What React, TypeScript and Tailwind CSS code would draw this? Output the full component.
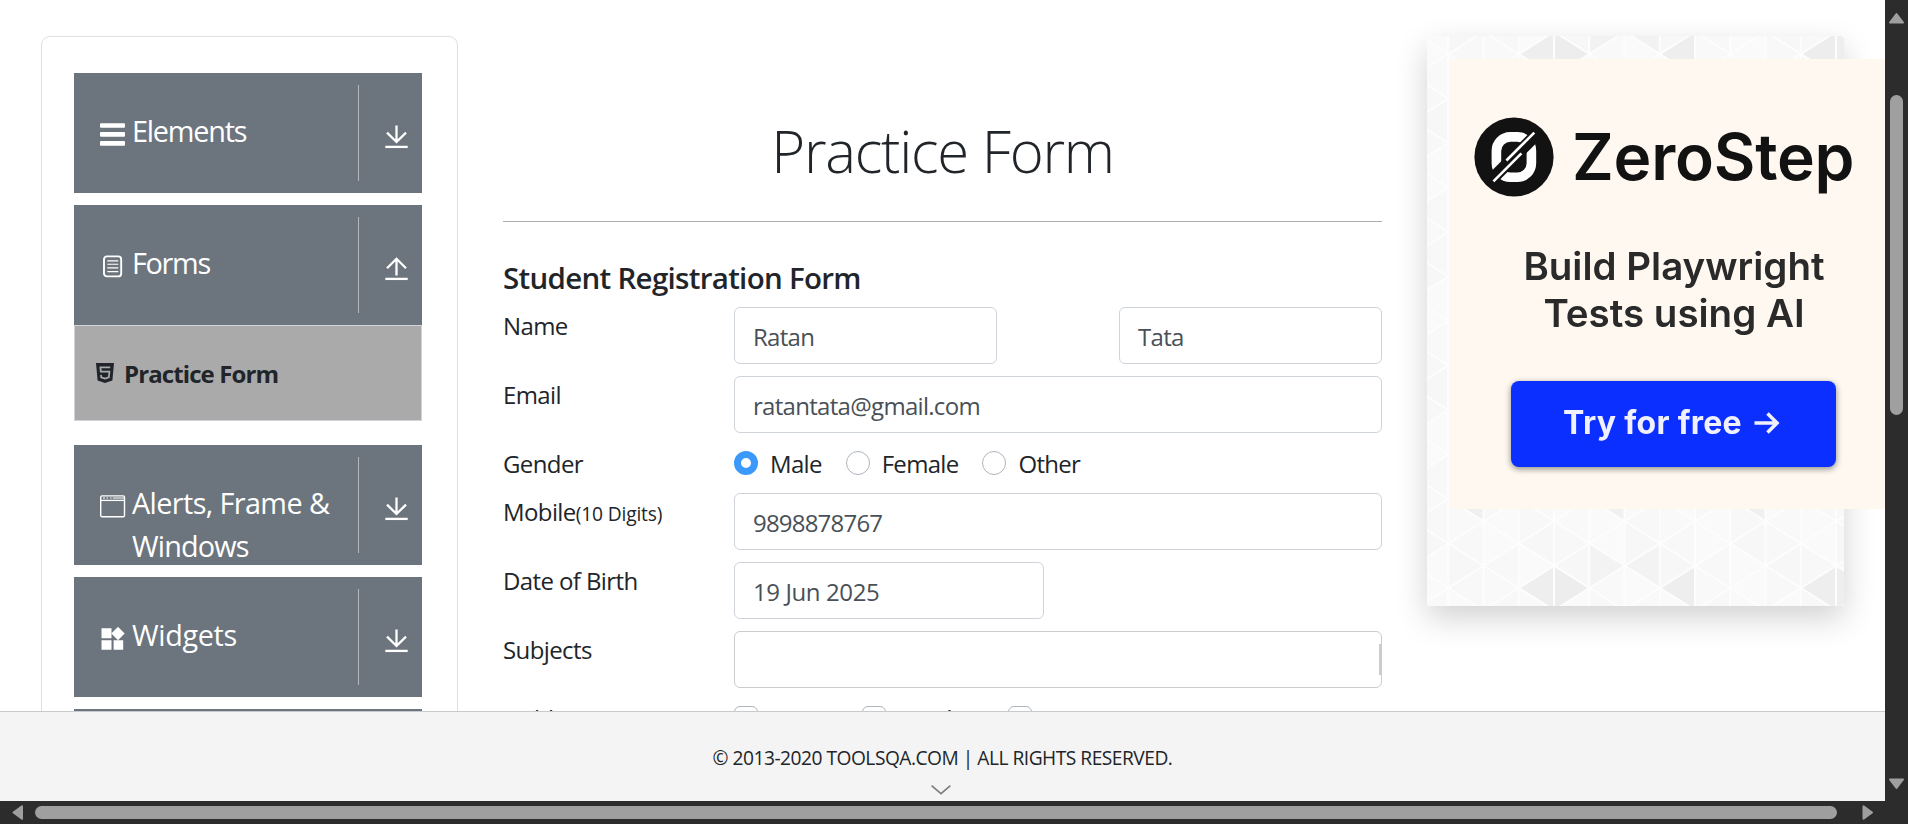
import { type ReactNode } from "react";

type Glyph = "menu" | "form" | "window" | "widgets" | "none";

function Icon({ kind }: { kind: Glyph }) {
  if (kind === "menu")
    return (
      <svg width="26" height="24" viewBox="0 0 26 24" fill="#fff">
        <rect x="0" y="0.2" width="25" height="4.6" rx="1" />
        <rect x="0" y="9.1" width="25" height="4.6" rx="1" />
        <rect x="0" y="18.1" width="25" height="4.6" rx="1" />
      </svg>
    );
  if (kind === "form")
    return (
      <svg width="26" height="24" viewBox="0 0 26 24" fill="none" stroke="#fff">
        <rect x="4" y="1.4" width="17.2" height="20" rx="3" strokeWidth="1.9" />
        <path d="M7.3 5.9h11M7.3 9.3h11M7.3 12.9h11M7.3 16.6h11" strokeWidth="1.1" />
      </svg>
    );
  if (kind === "window")
    return (
      <svg width="26" height="24" viewBox="0 0 26 24" fill="none" stroke="#fff">
        <rect x="0.7" y="0.9" width="23.8" height="20.8" rx="1.3" strokeWidth="1.4" />
        <path d="M1 5.4h23.5" strokeWidth="1.3" />
        <path d="M3 3h2M6.5 3h1.5M10 3h1.5M12.8 3h11.5" strokeWidth="1" />
      </svg>
    );
  if (kind === "widgets")
    return (
      <svg width="26" height="24" viewBox="0 0 26 24" fill="#fff">
        <path d="M1.5 1.2h10v10h-10zM1.5 13.2h10v9.6h-10zM13.6 13.2h9.6v9.6h-9.6z" />
        <path d="M18 -0.2L24.7 6.5L18 13.2L11.3 6.5z" />
      </svg>
    );
  return null;
}

function Arrow({ up }: { up?: boolean }) {
  return (
    <svg width="24" height="25" viewBox="0 0 24 25" fill="none" stroke="#fff" strokeWidth="2.3">
      {up ? <path d="M11.5 18.6V1.8M2 11.2L11.5 1.8L21 11.2" /> : <path d="M11.5 0.4V17M2 7.6L11.5 17L21 7.6" />}
      <path d="M0.3 21.9h22.4" />
    </svg>
  );
}

function Group({ kind, up, children }: { kind: Glyph; up?: boolean; children?: ReactNode }) {
  return (
    <div className="flex h-[120px] shrink-0 overflow-hidden bg-[#6c757d] py-3">
      <div className="flex w-[285px] shrink-0 border-r border-[#b3b7bb] pl-[26px] pt-6">
        <div className="mt-[14px] h-6 w-8 shrink-0">
          <Icon kind={kind} />
        </div>
        <div className="flex flex-col whitespace-nowrap text-[28.8px] leading-[43px] text-white">{children}</div>
      </div>
      <div className="pl-[26px] pt-10">
        <Arrow up={up} />
      </div>
    </div>
  );
}

function Html5() {
  return (
    <svg width="18" height="20" viewBox="0 0 18 20">
      <path d="M0 0h18l-1.6 17.4L9 20l-7.4-2.6z" fill="#212529" />
      <path d="M14.2 4.4H4.4l.4 4.3h8.6l-.6 5.6L9 15.5l-3.8-1.2-.2-2.4" fill="none" stroke="#aaa" strokeWidth="1.7" />
    </svg>
  );
}

function Field({ className = "", children }: { className?: string; children?: ReactNode }) {
  return (
    <div
      className={`h-[57px] rounded-md border border-[#ced4da] bg-white pl-[18px] pt-[11px] text-2xl leading-9 text-[#495057] ${className}`}
    >
      {children}
    </div>
  );
}

function Row({ label, children }: { label: ReactNode; children: ReactNode }) {
  return (
    <div className="mb-3 flex">
      <div className="h-9 w-[231px] shrink-0 pt-px text-2xl leading-9 tracking-[-0.6px]">{label}</div>
      <div className="flex grow">{children}</div>
    </div>
  );
}

function Radio({ on, text }: { on?: boolean; text: string }) {
  return (
    <div className="mr-6 flex h-9">
      {on ? (
        <span className="mt-1.5 h-6 w-6 rounded-full border-[7px] border-[#3b99fc] bg-white" />
      ) : (
        <span className="mt-1.5 h-6 w-6 rounded-full border border-[#adb5bd] bg-white" />
      )}
      <span className="ml-3 pt-px text-2xl leading-9 tracking-[-0.7px]">{text}</span>
    </div>
  );
}

function Check({ text }: { text: string }) {
  return (
    <div className="mr-6 flex h-9">
      <span className="mt-1.5 h-6 w-6 rounded-md border border-[#adb5bd] bg-white" />
      <span className="ml-3 pt-px text-2xl leading-9 tracking-[-0.65px]">{text}</span>
    </div>
  );
}

const COL = 35.25;
const ROW = 44.5;
const SHADES = ["#f8f8f8", "#fafafa", "#f7f7f7", "#f9f9f9", "#fafafa", "#f8f8f8"];
const ACCENTS: Record<string, string> = {
  "L2,12": "#eeeeee",
  "R4,12": "#ededed",
  "L6,12": "#eeeeee",
  "L10,12": "#eeeeee",
  "R12,12": "#eeeeee",
  "L2,0": "#eeeeee",
  "R4,0": "#ededed",
  "L6,0": "#eeeeee",
  "L10,0": "#ededed",
  "R12,0": "#eeeeee",
  "R5,0": "#f2f2f2",
  "L5,0": "#f2f2f2",
  "R5,12": "#f3f3f3",
  "L5,12": "#f3f3f3",
  "L0,10": "#f0f0f0",
  "L4,10": "#f1f1f1",
  "L8,10": "#f0f0f0",
};

function Mosaic() {
  const shapes: ReactNode[] = [];
  for (let c = -1; c <= 12; c++) {
    for (let r = -1; r <= 14; r++) {
      const x = 21.3 + COL * c;
      const y = (c % 2 === 0 ? 18 : -4.2) + ROW * r;
      const left = `L${c},${r}`;
      const right = `R${c},${r}`;
      const n = (c + 2) * 7 + (r + 3) * 5;
      shapes.push(
        <path
          key={left}
          d={`M${x} ${y}L${x + COL} ${y - ROW / 2}V${y + ROW / 2}z`}
          fill={ACCENTS[left] ?? SHADES[n % 6]}
        />,
        <path
          key={right}
          d={`M${x} ${y}L${x - COL} ${y - ROW / 2}V${y + ROW / 2}z`}
          fill={ACCENTS[right] ?? SHADES[(n + 2) % 6]}
        />,
      );
    }
  }
  return (
    <svg width="417" height="570" viewBox="0 0 417 570" stroke="#fdfdfd" strokeWidth="1.8" strokeLinejoin="round">
      {shapes}
    </svg>
  );
}

function Mark() {
  return (
    <svg width="80" height="80" viewBox="9 11.7 80 80">
      <circle cx="49" cy="51.7" r="39.6" fill="#121212" />
      <rect x="31.4" y="31.6" width="35" height="40.4" rx="14" fill="none" stroke="#fff" strokeWidth="9.6" />
      <path d="M75 25.7L23 77.7" stroke="#121212" strokeWidth="12" />
      <path d="M69.3 27.3L41.4 55.2M56.4 48L28.4 76" stroke="#fff" strokeWidth="2.6" />
    </svg>
  );
}

function Advert() {
  return (
    <div className="absolute left-[22px] top-[23px] h-[450px] w-[436px] overflow-hidden bg-[#fef8f1] font-['Inter',sans-serif]">
      <div className="flex w-[450px] flex-col blur-[0.6px]">
        <div className="mt-[58px] flex h-20 items-center pl-[25px]">
          <Mark />
          <span className="ml-[18px] whitespace-nowrap text-[64px] font-semibold leading-[80px] tracking-[-0.2px] text-[#121212]">
            ZeroStep
          </span>
        </div>
        <div className="mt-[46px] w-[450px] text-center text-[38.5px] font-semibold leading-[47px] text-[#2a2a2a]">
          Build Playwright
          <br />
          Tests using AI
        </div>
        <div className="ml-[62px] mt-[44px] flex h-[86px] w-[325px] items-center justify-center rounded-lg bg-[#0a2fff] pb-0.5 pr-1 text-[32px] font-bold tracking-[0.3px] text-[#f0f0ff] shadow-[0_2px_6px_rgba(0,0,0,0.45)]">
          Try for free
          <svg className="ml-3" width="26" height="24" viewBox="0 0 26 24" fill="none" stroke="#f0f0ff" strokeWidth="3.6">
            <path d="M0.5 12h22M13.5 2.5L23 12L13.5 21.5" />
          </svg>
        </div>
      </div>
    </div>
  );
}

function Chevron({ d, w, h }: { d: string; w: number; h: number }) {
  return (
    <svg width={w} height={h} viewBox={`0 0 ${w} ${h}`} fill="#9f9f9f" stroke="#9f9f9f" strokeWidth="2" strokeLinejoin="round">
      <path d={d} />
    </svg>
  );
}

export default function App() {
  return (
    <div className="flex h-[824px] w-[1908px] flex-col overflow-hidden bg-[#2c2c2c] font-['Open_Sans',sans-serif] text-[#212529]">
      <div className="flex h-[801px] shrink-0">
        <div className="flex w-[1885px] shrink-0 flex-col overflow-hidden bg-white">
          <main className="flex h-[711px] shrink-0 overflow-hidden pl-[41px] pt-9">
            <aside className="flex h-[900px] w-[417px] shrink-0 flex-col gap-3 rounded-[9px] border border-[#dfdfdf] pl-8 pr-[35px] pt-9">
              <Group kind="menu">
                <span className="tracking-[-1.2px]">Elements</span>
              </Group>
              <div className="mb-3 shrink-0">
                <Group kind="form" up>
                  <span className="tracking-[-1.3px]">Forms</span>
                </Group>
                <div className="flex h-24 border border-[#ced4da] bg-[#aaa] pl-[21px] pt-[37px]">
                  <Html5 />
                  <span className="-mt-[7px] ml-[10px] text-2xl font-bold leading-9 tracking-[-0.9px]">Practice Form</span>
                </div>
              </div>
              <Group kind="window">
                <span className="tracking-[-0.6px]">Alerts, Frame &amp;</span>
                <span className="tracking-[-0.85px]">Windows</span>
              </Group>
              <Group kind="widgets">
                <span className="tracking-[-0.35px]">Widgets</span>
              </Group>
              <Group kind="none" />
            </aside>

            <section className="ml-[45px] w-[879px] shrink-0">
              <h1 className="mt-[75px] h-[111px] border-b border-[#adafb0] text-center text-[58px] font-light leading-[80px] tracking-[-1.25px]">
                Practice Form
              </h1>
              <h5 className="mt-[38px] h-[47px] text-[29.5px] font-semibold leading-9 tracking-[-0.7px]">Student Registration Form</h5>
              <Row label="Name">
                <Field className="w-[263px] tracking-[-0.7px]">Ratan</Field>
                <Field className="ml-auto w-[263px] tracking-[-0.7px]">Tata</Field>
              </Row>
              <Row label="Email">
                <Field className="w-full tracking-[-0.7px]">ratantata@gmail.com</Field>
              </Row>
              <Row label="Gender">
                <Radio on text="Male" />
                <Radio text="Female" />
                <Radio text="Other" />
              </Row>
              <Row
                label={
                  <>
                    Mobile<span className="text-[19.2px] tracking-[-0.15px]">(10 Digits)</span>
                  </>
                }
              >
                <Field className="w-full tracking-[-0.8px]">9898878767</Field>
              </Row>
              <Row label="Date of Birth">
                <Field className="w-[310px] tracking-[-0.4px]">19 Jun 2025</Field>
              </Row>
              <Row label="Subjects">
                <div className="flex h-[57px] w-full justify-end rounded-md border border-[#ccc] pt-3">
                  <span className="h-[31px] w-0.5 bg-[#ccc]" />
                </div>
              </Row>
              <Row label="Hobbies">
                <Check text="Sports" />
                <Check text="Reading" />
                <Check text="Music" />
              </Row>
            </section>

            <div className="relative ml-[45px] h-[570px] w-[417px] shrink-0 shadow-[0_12px_30px_rgba(0,0,0,0.18)]">
              <Mosaic />
              <Advert />
            </div>
          </main>

          <footer className="flex grow flex-col items-center border-t border-[#c8cacc] bg-[#f4f4f4] pt-8">
            <span className="text-[19.2px] leading-7 tracking-[-0.5px]">© 2013-2020 TOOLSQA.COM | ALL RIGHTS RESERVED.</span>
            <svg className="-ml-[3px] mt-[13px]" width="20" height="10" viewBox="0 0 20 10" fill="none" stroke="#7d7d7d" strokeWidth="1.6">
              <path d="M0.6 0.6L10 8.6L19.4 0.6" />
            </svg>
          </footer>
        </div>

        <div className="flex w-[23px] shrink-0 flex-col items-center pt-3">
          <Chevron w={15} h={12} d="M7.5 2L14 10.5H1z" />
          <div className="mt-[71px] h-[320px] w-[13px] shrink-0 rounded-full bg-[#9f9f9f]" />
          <div className="mt-[363px]">
            <Chevron w={15} h={12} d="M7.5 10L14 1.5H1z" />
          </div>
        </div>
      </div>
      <div className="flex h-[23px] shrink-0 items-center pl-3">
        <Chevron w={12} h={15} d="M1.5 7.5L10 1.3V13.7z" />
        <div className="ml-[11px] h-[13px] w-[1802px] shrink-0 rounded-full bg-[#9f9f9f]" />
        <div className="ml-[25px]">
          <Chevron w={12} h={15} d="M10 7.5L1.5 1.3V13.7z" />
        </div>
      </div>
    </div>
  );
}
